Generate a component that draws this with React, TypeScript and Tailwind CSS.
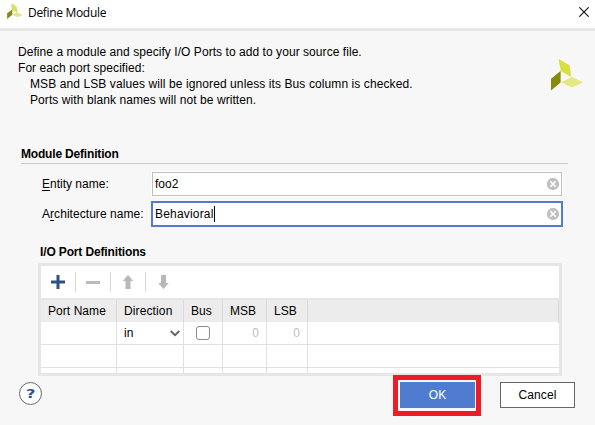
import type { ReactNode } from "react";

function Logo({ className }: { className: string }) {
  return (
    <svg className={className} viewBox="0 0 32 32" fill="none" preserveAspectRatio="none">
      <path d="M7.6 0 L18.5 6.2 L20.3 18 L9.7 12 Z" fill="#d6e040" />
      <path d="M9.6 12 V23.5 L0 31.5 V19.7 Z" fill="#868a0c" />
      <path d="M10.2 23.3 L21 18 L32 23.2 L21.2 28.4 Z" fill="#e3e97c" />
    </svg>
  );
}

function SmallLogo({ className }: { className: string }) {
  return (
    <svg className={className} viewBox="0 0 16 16" fill="none">
      <path d="M4.2 0 L6.4 0.3 L9.9 3.4 L10.6 9 L4.8 5.6 Z" fill="#d8de5e" />
      <path d="M5.4 5.4 V10.8 L0.1 15 V9.2 Z" fill="#868a18" />
      <path d="M5.4 10.8 L10 8.2 L16 10.9 L10.4 13.2 Z" fill="#e3e78c" />
    </svg>
  );
}

function ClearIcon() {
  return (
    <svg className="h-3 w-3 shrink-0" viewBox="0 0 12 12">
      <circle cx="6" cy="6" r="6.1" fill="#c0c0c0" />
      <path d="M3.3 3.3 L8.7 8.7 M8.7 3.3 L3.3 8.7" stroke="#fff" strokeWidth="1.6" />
    </svg>
  );
}

function Tool({ children, last }: { children: ReactNode; last?: boolean }) {
  return (
    <div className={`flex h-5 w-[35px] items-center justify-center ${last ? "" : "border-r border-[#d8d8d8]"}`}>
      <svg className="h-[14px] w-[14px]" viewBox="0 0 14 14">
        {children}
      </svg>
    </div>
  );
}

const cols = "grid grid-cols-[76px_67px_39px_44px_41px_251px]";

function EmptyCells() {
  return (
    <>
      {[0, 1, 2, 3, 4].map((i) => (
        <div key={i} className="border-r border-[#e0e0e0]" />
      ))}
      <div />
    </>
  );
}

export default function App() {
  return (
    <div className="flex h-[425px] w-[595px] flex-col overflow-hidden bg-[#f7f7f7] font-['Liberation_Sans',Arial,sans-serif] text-[12px] leading-4 whitespace-nowrap text-black">
      <header className="flex h-[31px] shrink-0 items-center border-b-[3px] border-[#e6e6e6] bg-white pr-[6px] pl-[7px]">
        <SmallLogo className="mt-[-4px] h-4 w-4" />
        <span className="mt-[-2px] ml-[5px] font-['Open_Sans',sans-serif] text-[12px] tracking-[-0.32px]">Define Module</span>
        <svg className="mt-[-4px] ml-auto h-[10px] w-[10px]" viewBox="0 0 10 10">
          <path d="M0.3 0.3 L9.7 9.7 M9.7 0.3 L0.3 9.7" stroke="#111" strokeWidth="1.1" />
        </svg>
      </header>

      <section className="flex h-[115px] shrink-0 justify-between pr-3 pl-[18px]">
        <div className="pt-[13px]">
          <p className="tracking-[0.055px]">Define a module and specify I/O Ports to add to your source file.</p>
          <p className="tracking-[0.06px]">For each port specified:</p>
          <p className="pl-3 tracking-[0.095px]">MSB and LSB values will be ignored unless its Bus column is checked.</p>
          <p className="pl-3 tracking-[0.08px]">Ports with blank names will not be written.</p>
        </div>
        <Logo className="mt-7 h-8 w-8" />
      </section>

      <h2 className="mx-[21px] mr-[27px] h-[18px] shrink-0 border-b border-[#cacaca] font-bold tracking-[-0.18px]">
        Module Definition
      </h2>

      <div className="mt-[7px] flex h-[26px] shrink-0 items-center pr-8 pl-[42px]">
        <label className="w-[109px]">
          <u className="underline-offset-2">E</u>ntity name:
        </label>
        <div className="h-[26px] flex-1 border border-white">
          <div className="flex h-6 items-center justify-between border border-[#bfbfbf] bg-white pr-[2px] pl-[2px]">
            <span>foo2</span>
            <ClearIcon />
          </div>
        </div>
      </div>

      <div className="mt-1 flex h-[26px] shrink-0 items-center pr-8 pl-[42px]">
        <label className="w-[109px] tracking-[0.05px]">
          A<u className="underline-offset-2">r</u>chitecture name:
        </label>
        <div className="flex h-[26px] flex-1 items-center border-2 border-[#4f7ccd] bg-white pr-[2px] pl-[2px]">
          <span className="w-[59px] tracking-[0.18px]">Behavioral</span>
          <span className="h-4 w-px bg-black" />
          <span className="ml-auto">
            <ClearIcon />
          </span>
        </div>
      </div>

      <h3 className="mt-[17px] ml-10 h-[19px] shrink-0 font-bold tracking-[-0.14px]">I/O Port Definitions</h3>

      <div className="mr-[33px] ml-[38px] flex h-[113px] shrink-0 flex-col border-[3px] border-[#e6e6e6] bg-white">
        <div className="flex h-[34px] shrink-0 items-start border-b-2 border-[#e6e6e6] pt-[6px]">
          <Tool>
            <path d="M7 0 V14 M0 7 H14" stroke="#2f4f87" strokeWidth="3" />
          </Tool>
          <Tool>
            <path d="M0 7.5 H14" stroke="#bababa" strokeWidth="3" />
          </Tool>
          <Tool>
            <path d="M7 0 L12.3 6 H9.5 V14 H4.5 V6 H1.7 Z" fill="#b8b8b8" />
          </Tool>
          <Tool last>
            <path d="M6.5 14 L11.8 8 H9 V0 H4 V8 H1.2 Z" fill="#b8b8b8" />
          </Tool>
        </div>
        <div className={`${cols} h-[22px] shrink-0 bg-[#ececec] leading-[23px]`}>
          <div className="border-r border-[#dadada] pl-[7px] tracking-[0.06px]">Port Name</div>
          <div className="border-r border-[#dadada] pl-[7px] tracking-[0.12px]">Direction</div>
          <div className="border-r border-[#dadada] pl-[7px]">Bus</div>
          <div className="border-r border-[#dadada] pl-[7px]">MSB</div>
          <div className="border-r border-[#dadada] pl-[7px]">LSB</div>
          <div className="border-r border-[#dadada]" />
        </div>
        <div className={`${cols} h-[23px] shrink-0 grid-rows-[22px] border-b border-[#e0e0e0] leading-[23px]`}>
          <div className="border-r border-[#e0e0e0]" />
          <div className="flex items-center justify-between border-r border-[#e0e0e0] pr-[3px] pl-[7px]">
            in
            <svg className="h-[7px] w-[10px]" viewBox="0 0 10 7">
              <path d="M0.7 1 L5 5.2 L9.3 1" fill="none" stroke="#666" strokeWidth="1.9" />
            </svg>
          </div>
          <div className="flex items-center justify-center border-r border-[#e0e0e0]">
            <span className="h-[14px] w-[14px] rounded-[3px] border border-[#8c8c8c] bg-white" />
          </div>
          <div className="border-r border-[#e0e0e0] pr-[7px] text-right text-[#bdbdbd]">0</div>
          <div className="border-r border-[#e0e0e0] pr-[7px] text-right text-[#bdbdbd]">0</div>
          <div />
        </div>
        <div className={`${cols} h-[23px] shrink-0 border-b border-[#e0e0e0]`}>
          <EmptyCells />
        </div>
        <div className={`${cols} flex-1`}>
          <EmptyCells />
        </div>
      </div>

      <footer className="flex items-start pt-[6px] pr-5 pl-[19px]">
        <span className="flex h-[23px] w-[23px] items-center justify-center rounded-full border border-[#666] bg-white font-['DejaVu_Sans',sans-serif] text-[13px] font-bold text-[#2f4f8f]">
          <span className="scale-x-125">?</span>
        </span>
        <div className="relative ml-auto">
          <button className="block h-[26px] w-[75px] bg-[#4f7ccf] text-white">OK</button>
          <span className="absolute -top-[7px] -left-[7px] h-[41px] w-[88px] border-[5px] border-[#ee1c24]" />
        </div>
        <button className="ml-[25px] h-[26px] w-[75px] border border-[#666] bg-white tracking-[0.12px]">Cancel</button>
      </footer>
    </div>
  );
}
